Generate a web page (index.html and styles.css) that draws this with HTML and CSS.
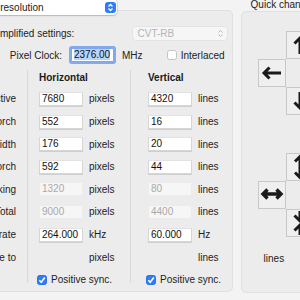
FILE: index.html
```html
<!DOCTYPE html>
<html lang="en">
<head>
    <meta charset="UTF-8">
    <meta name="viewport" content="width=device-width, initial-scale=1.0">
    <title>Custom Resolution</title>
    <link rel="stylesheet" href="styles.css">
</head>
<body>
    <div class="window">
        <!-- Timing panel -->
        <div class="main">
            <div class="mode-popup">
                <span>Custom resolution</span>
                <span class="stepper">
                    <svg width="11" height="11" viewBox="0 0 11 11"><path d="M3.5 4.5 L5.5 2.5 L7.5 4.5 M3.5 6.5 L5.5 8.5 L7.5 6.5" fill="none" stroke="#fff" stroke-width="1.3"/></svg>
                </span>
            </div>

            <div class="box box-main">
                <div class="settings-row">
                    <span class="settings-label">Simplified settings:</span>
                    <div class="cvt-popup">
                        <span>CVT-RB</span>
                        <svg width="7" height="9" viewBox="0 0 7 9"><path d="M1.5 3.5 L3.5 1.5 L5.5 3.5 M1.5 5.5 L3.5 7.5 L5.5 5.5" fill="none" stroke="#b8b8b8" stroke-width="1"/></svg>
                    </div>
                </div>

                <div class="clock-row">
                    <span class="clock-label">Pixel Clock:</span>
                    <div class="field clock-field"><span class="selected">2376.00</span></div>
                    <span class="clock-unit">MHz</span>
                    <label class="check interlaced"><span class="box-check"></span>Interlaced</label>
                </div>

                <div class="timing-table">
                    <div class="labels-col">
                        <div class="col-head"></div>
                        <div class="row">Active</div>
                        <div class="row">Front porch</div>
                        <div class="row">Sync width</div>
                        <div class="row">Back porch</div>
                        <div class="row">Blanking</div>
                        <div class="row">Total</div>
                        <div class="row">Scan rate</div>
                        <div class="row">Scale to</div>
                    </div>

                    <div class="col col-h">
                        <div class="col-head">Horizontal</div>
                        <div class="row"><div class="field">7680</div><span>pixels</span></div>
                        <div class="row"><div class="field">552</div><span>pixels</span></div>
                        <div class="row"><div class="field">176</div><span>pixels</span></div>
                        <div class="row"><div class="field">592</div><span>pixels</span></div>
                        <div class="row"><div class="field disabled">1320</div><span>pixels</span></div>
                        <div class="row"><div class="field disabled">9000</div><span>pixels</span></div>
                        <div class="row"><div class="field">264.000</div><span>kHz</span></div>
                        <div class="row"><div class="field-spacer"></div><span>pixels</span></div>
                        <div class="row"><label class="check"><span class="box-check checked"><svg width="10" height="10" viewBox="0 0 10 10"><path d="M2.3 5.2 L4.2 7.2 L7.8 2.6" fill="none" stroke="#fff" stroke-width="1.6"/></svg></span>Positive sync.</label></div>
                    </div>

                    <div class="col col-v">
                        <div class="col-head">Vertical</div>
                        <div class="row"><div class="field">4320</div><span>lines</span></div>
                        <div class="row"><div class="field">16</div><span>lines</span></div>
                        <div class="row"><div class="field">20</div><span>lines</span></div>
                        <div class="row"><div class="field">44</div><span>lines</span></div>
                        <div class="row"><div class="field disabled">80</div><span>lines</span></div>
                        <div class="row"><div class="field disabled">4400</div><span>lines</span></div>
                        <div class="row"><div class="field">60.000</div><span>Hz</span></div>
                        <div class="row"><div class="field-spacer"></div><span>lines</span></div>
                        <div class="row"><label class="check"><span class="box-check checked"><svg width="10" height="10" viewBox="0 0 10 10"><path d="M2.3 5.2 L4.2 7.2 L7.8 2.6" fill="none" stroke="#fff" stroke-width="1.6"/></svg></span>Positive sync.</label></div>
                    </div>
                </div>
            </div>
        </div>

        <!-- Quick changes panel -->
        <div class="side">
            <div class="side-title">Quick changes</div>
            <div class="box box-side">
                <div class="arrow-grid">
                    <div class="arrow-btn up"><svg width="28" height="28" viewBox="0 0 28 28"><path d="M14 23 V8 M8.5 12.5 L14 7 L19.5 12.5" fill="none" stroke="#1a1a1a" stroke-width="3"/></svg></div>
                    <div class="arrow-btn left"><svg width="28" height="28" viewBox="0 0 28 28"><path d="M23 14 H7 M11.5 8.5 L6 14 L11.5 19.5" fill="none" stroke="#1a1a1a" stroke-width="3"/></svg></div>
                    <div class="arrow-btn right"><svg width="28" height="28" viewBox="0 0 28 28"><path d="M5 14 H21 M16.5 8.5 L22 14 L16.5 19.5" fill="none" stroke="#1a1a1a" stroke-width="3"/></svg></div>
                    <div class="arrow-btn down"><svg width="28" height="28" viewBox="0 0 28 28"><path d="M14 5 V20 M8.5 15.5 L14 21 L19.5 15.5" fill="none" stroke="#1a1a1a" stroke-width="3"/></svg></div>
                </div>

                <div class="arrow-grid second">
                    <div class="arrow-btn up"><svg width="28" height="28" viewBox="0 0 28 28"><path d="M14 4 V24 M9 8.5 L14 3.5 L19 8.5 M9 19.5 L14 24.5 L19 19.5" fill="none" stroke="#1a1a1a" stroke-width="3"/></svg></div>
                    <div class="arrow-btn left"><svg width="28" height="28" viewBox="0 0 28 28"><path d="M5 13 H23 M9.5 8.5 L5 13 L9.5 17.5 M18.5 8.5 L23 13 L18.5 17.5" fill="none" stroke="#1a1a1a" stroke-width="3.4"/></svg></div>
                    <div class="arrow-btn right"><svg width="28" height="28" viewBox="0 0 28 28"><path d="M4 14 H11 M17 14 H24 M7.5 9.5 L12 14 L7.5 18.5 M20.5 9.5 L16 14 L20.5 18.5" fill="none" stroke="#1a1a1a" stroke-width="3"/></svg></div>
                    <div class="arrow-btn down"><svg width="28" height="28" viewBox="0 0 28 28"><path d="M14 2 V11 M8.5 6.5 L14 12 L19.5 6.5 M14 26 V17 M8.5 21.5 L14 16 L19.5 21.5" fill="none" stroke="#1a1a1a" stroke-width="3"/></svg></div>
                </div>

                <div class="side-unit">lines</div>
            </div>
        </div>
    </div>
</body>
</html>
```

FILE: styles.css
```css
/* General Styles */
* {
    box-sizing: border-box;
}

body {
    margin: 0;
    width: 300px;
    height: 300px;
    overflow: hidden;
    background-color: #f3f3f3;
    font-family: 'Liberation Sans', Arial, sans-serif;
    font-size: 10px;
    color: #222;
}

.window {
    display: flex;
    align-items: flex-start;
    width: 480px;
    margin-left: -100px; /* window is cropped on the left */
}

.box {
    background-color: #ececec;
    border: 1px solid #e0e0e0;
    border-radius: 5px;
}

/* Timing panel */
.main {
    width: 334px;
    display: flex;
    flex-direction: column;
    margin-top: -1px;
}

.mode-popup {
    position: relative;
    z-index: 1;
    display: flex;
    align-items: center;
    width: 162px;
    height: 16px;
    margin-left: 55px;
    padding: 0 1px 0 8px;
    background-color: white;
    border-radius: 4px;
    box-shadow: 0 0 0 0.5px rgba(0, 0, 0, 0.18), 0 1px 1.5px rgba(0, 0, 0, 0.15);
}

.stepper {
    display: flex;
    width: 11px;
    height: 11px;
    margin-left: auto;
    background-color: #2f7df6;
    border-radius: 3px;
}

.box-main {
    height: 282px;
    margin-top: -5px;
    padding-top: 15px;
}

.settings-row {
    display: flex;
    align-items: center;
    height: 15px;
}

.settings-label {
    margin-left: 90px;
}

.cvt-popup {
    display: flex;
    align-items: center;
    justify-content: space-between;
    width: 96px;
    height: 15px;
    margin-left: auto;
    margin-right: 4px;
    padding: 0 3px 0 5px;
    color: #b4b4b4;
    background-color: #f6f6f6;
    border: 1px solid #e4e4e4;
    border-radius: 4px;
}

.clock-row {
    display: flex;
    align-items: center;
    height: 18px;
    margin-top: 5px;
}

.clock-label {
    width: 161px;
    text-align: right;
}

.field {
    width: 44px;
    height: 14px;
    margin-right: 6px;
    padding-left: 2px;
    line-height: 12px;
    color: #111;
    background-color: white;
    border: 1px solid #d6d6d6;
    border-top-color: #e2e2e2;
    box-shadow: 0 0.5px 0.5px rgba(0, 0, 0, 0.12);
}

.field.disabled {
    color: #a9a9a9;
    background-color: #f6f6f6;
    border-color: #ececec;
    box-shadow: none;
}

.field-spacer {
    width: 44px;
    margin-right: 6px;
}

.clock-field {
    width: 43px;
    margin: 0 8px 0 9px;
    border-color: #7fa7ee;
    border-radius: 1px;
    box-shadow: 0 0 0 2px #84aaee;
}

.selected {
    background-color: #b6d5fd;
}

.check {
    display: flex;
    align-items: center;
}

.box-check {
    display: flex;
    width: 10px;
    height: 10px;
    margin-right: 4px;
    background-color: white;
    border: 1px solid #c4c4c4;
    border-radius: 2.5px;
}

.box-check.checked {
    background-color: #2f7df6;
    border-color: #2a72e6;
}

.box-check.checked svg {
    margin: -1px;
}

.interlaced {
    margin-left: auto;
    margin-right: 7px;
}

.timing-table {
    display: flex;
    height: 213px;
    margin-top: 6px;
}

.labels-col {
    width: 115px;
    margin-right: 11px;
    text-align: right;
}

.col {
    border-left: 1px solid #d8d8d8;
}

.col-h {
    width: 103px;
    padding-left: 11px;
}

.col-v {
    padding-left: 17px;
}

.col-head {
    height: 17.7px;
    padding-top: 2px;
    font-weight: bold;
    color: #1a1a1a;
}

.row {
    display: flex;
    align-items: center;
    height: 22.6px;
}

.labels-col .row {
    justify-content: flex-end;
}

.row .check {
    margin-left: -2px;
}

/* Quick changes panel */
.side {
    width: 140px;
    margin-left: 8px;
}

.side-title {
    height: 12px;
    margin-top: -1px;
    padding-left: 10px;
    line-height: 12px;
}

.box-side {
    height: 282px;
    padding: 19px 0 0 16px;
}

.arrow-grid {
    display: grid;
    grid-template-columns: repeat(3, 28px);
    grid-template-rows: repeat(3, 28px);
}

.arrow-grid.second {
    margin-top: 38px;
}

.arrow-btn {
    display: flex;
    background-color: #efefef;
    border: 1px solid #c8c8c8;
}

.arrow-btn svg {
    margin: -1px;
}

.arrow-btn.up {
    grid-column: 2;
    grid-row: 1;
}

.arrow-btn.left {
    grid-column: 1;
    grid-row: 2;
}

.arrow-btn.right {
    grid-column: 3;
    grid-row: 2;
}

.arrow-btn.down {
    grid-column: 2;
    grid-row: 3;
}

.side-unit {
    margin: 16px 0 0 6px;
    line-height: 12px;
}
```
